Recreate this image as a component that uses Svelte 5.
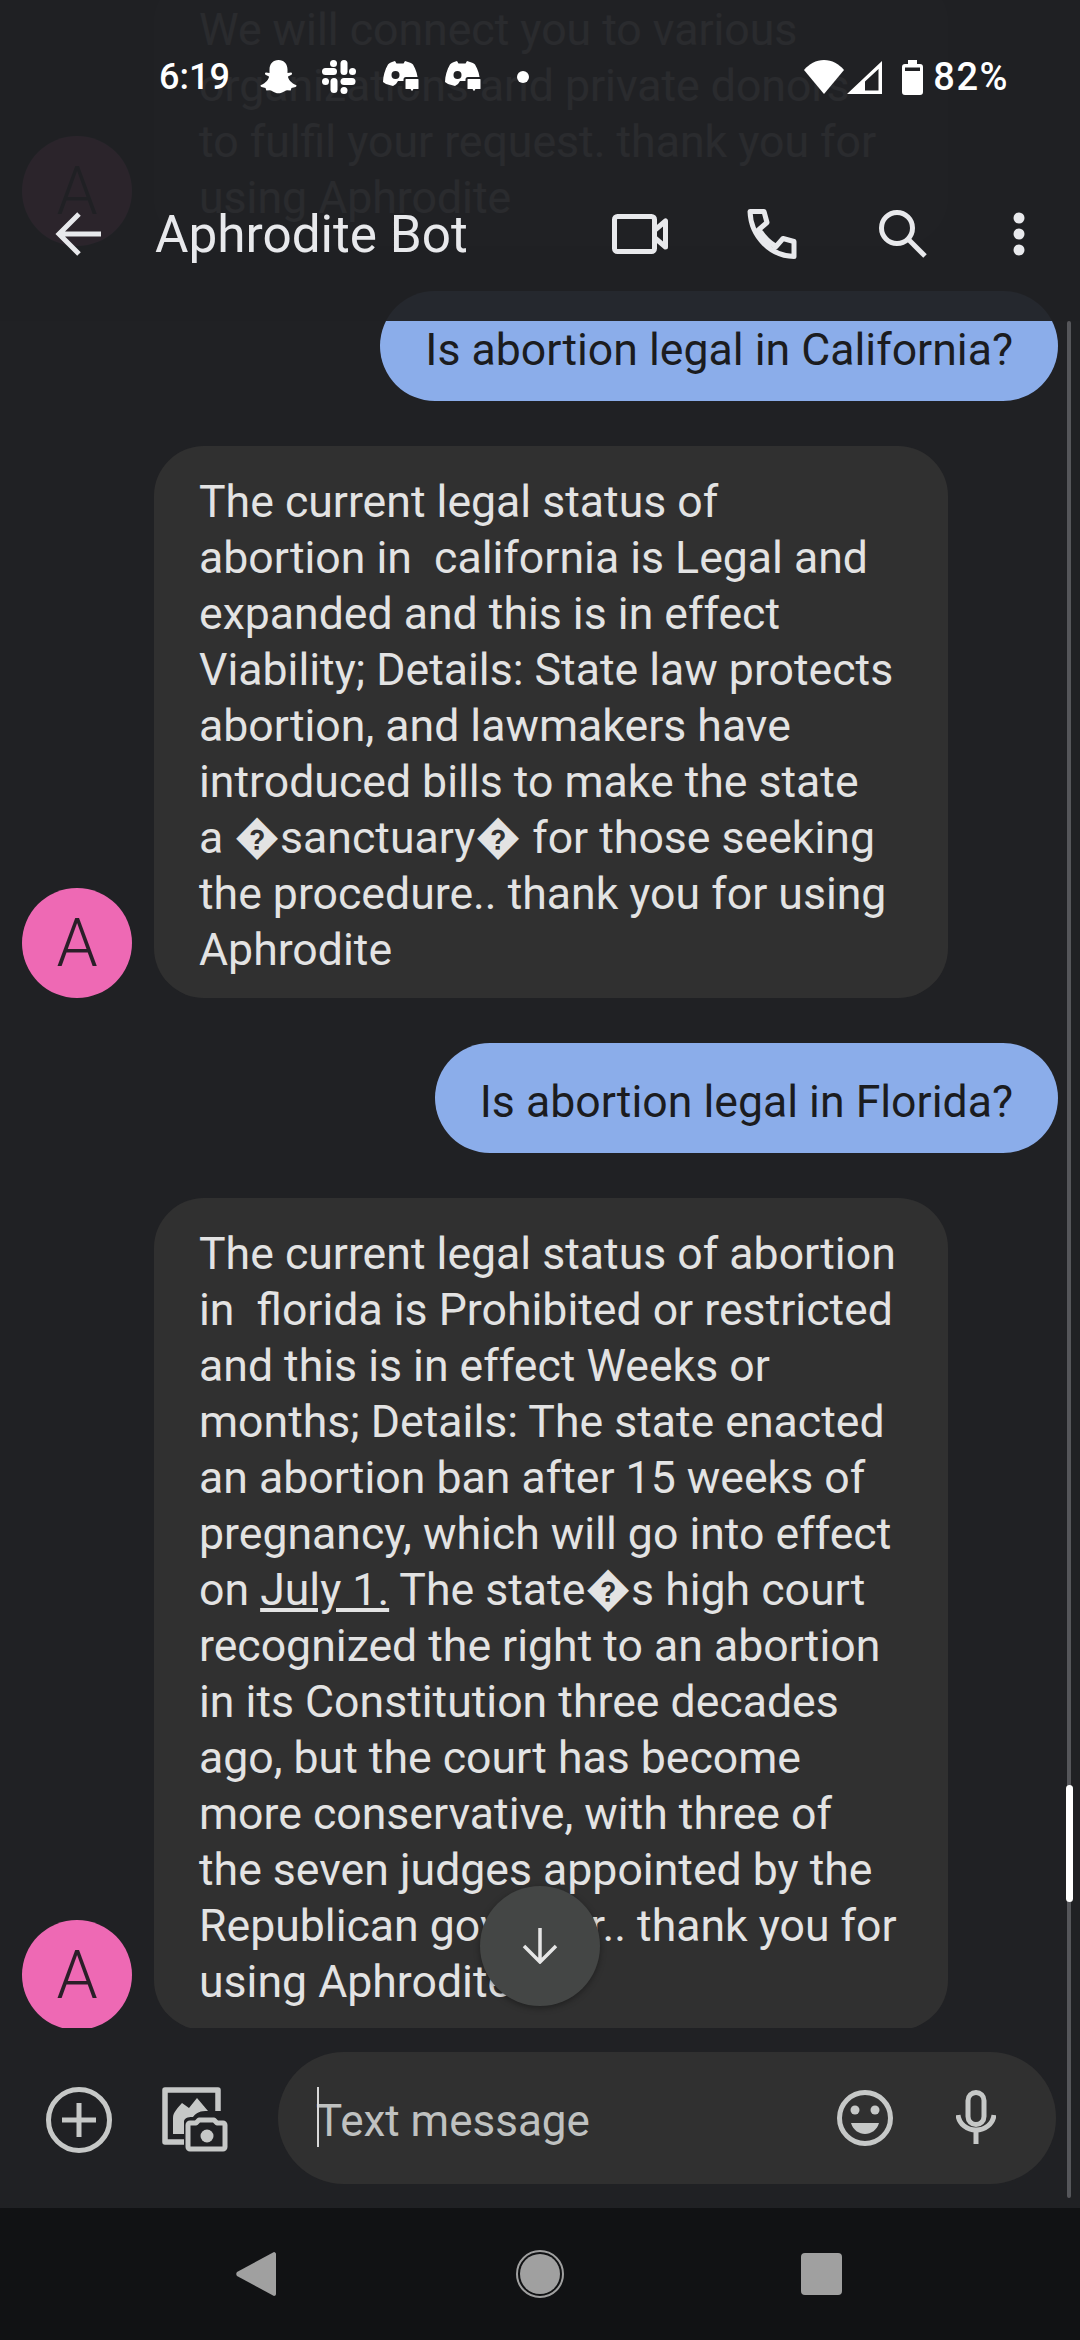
<script lang="ts">
  interface Message {
    from: 'bot' | 'me';
    lines: string[];
  }

  const before: Message[] = [
    {
      from: 'bot',
      lines: [
        'We will connect you to various',
        'organizations and private donors',
        'to fulfil your request. thank you for',
        'using Aphrodite'
      ]
    },
    { from: 'me', lines: ['Is abortion legal in California?'] },
    {
      from: 'bot',
      lines: [
        'The current legal status of',
        'abortion in  california is Legal and',
        'expanded and this is in effect',
        'Viability; Details: State law protects',
        'abortion, and lawmakers have',
        'introduced bills to make the state',
        'a �sanctuary� for those seeking',
        'the procedure.. thank you for using',
        'Aphrodite'
      ]
    },
    { from: 'me', lines: ['Is abortion legal in Florida?'] }
  ];

  const floridaTop = [
    'The current legal status of abortion',
    'in  florida is Prohibited or restricted',
    'and this is in effect Weeks or',
    'months; Details: The state enacted',
    'an abortion ban after 15 weeks of',
    'pregnancy, which will go into effect'
  ];
  const floridaRest = [
    'recognized the right to an abortion',
    'in its Constitution three decades',
    'ago, but the court has become',
    'more conservative, with three of',
    'the seven judges appointed by the',
    'Republican governor.. thank you for',
    'using Aphrodite'
  ];
</script>

<div class="phone">
  <div class="thread">
    {#each before as msg}
      {#if msg.from === 'me'}
        <div class="bubble out">{msg.lines[0]}</div>
      {:else}
        <div class="row">
          <div class="avatar">A</div>
          <div class="bubble in">
            {#each msg.lines as line}<span class="line">{line}</span>{/each}
          </div>
        </div>
      {/if}
    {/each}
    <div class="row last">
      <div class="avatar">A</div>
      <div class="bubble in">
        {#each floridaTop as line}<span class="line">{line}</span>{/each}
        <span class="line">on <u>July 1.</u> The state�s high court</span>
        {#each floridaRest as line}<span class="line">{line}</span>{/each}
      </div>
    </div>
  </div>

  <div class="composer">
    <svg class="add" width="66" height="66" viewBox="0 0 66 66" fill="none" stroke="currentColor" stroke-width="5">
      <circle cx="33" cy="33" r="30.5" />
      <path d="M33 16v34M16 33h34" />
    </svg>
    <svg class="media" width="66" height="66" viewBox="0 0 66 66">
      <path d="M56 24V3H3v52h19" fill="none" stroke="currentColor" stroke-width="5.5" stroke-linejoin="round" />
      <path d="M11 47V31c0-6 5-10 9-15l7 5 8-10 11 13c-8 0-11 1-15 6-3 0-8 0-9 4v13z" fill="currentColor" />
      <path d="M28 36h6l3-3h15l3 3h6c1 0 2 1 2 2v22c0 1-1 2-2 2H28c-1 0-2-1-2-2V38c0-1 1-2 2-2z" fill="none" stroke="currentColor" stroke-width="5" stroke-linejoin="round" />
      <circle cx="45" cy="49" r="6.5" fill="currentColor" />
    </svg>
    <div class="field">
      <span class="caret"></span>
      <span class="placeholder">Text message</span>
      <svg class="emoji" width="56" height="56" viewBox="0 0 56 56" fill="none">
        <circle cx="28" cy="28" r="25.5" stroke="currentColor" stroke-width="5" />
        <circle cx="18" cy="20" r="4.5" fill="currentColor" />
        <circle cx="38" cy="20" r="4.5" fill="currentColor" />
        <path d="M14 33h28c-2 7-8 11-14 11s-12-4-14-11z" fill="currentColor" />
      </svg>
      <svg class="mic" width="40" height="54" viewBox="0 0 40 54" fill="none" stroke="currentColor" stroke-width="5">
        <rect x="12" y="2.5" width="16" height="32" rx="8" />
        <path d="M2 25c1 9 9 15 18 15s17-6 18-15" />
        <path d="M20 40v14" />
      </svg>
    </div>
  </div>

  <nav class="nav">
    <svg width="40" height="44" viewBox="0 0 40 44"><path d="M38 0c1 0 2 1 2 2v40c0 1-1 2-2 2L1 24c-1-1-1-3 0-4z" fill="currentColor" /></svg>
    <svg width="48" height="50" viewBox="0 0 48 50" fill="none">
      <circle cx="24" cy="25" r="23" stroke="currentColor" stroke-width="2" />
      <circle cx="24" cy="25" r="20" fill="currentColor" />
    </svg>
    <span class="recents"></span>
  </nav>

  <!-- translucent app bar: earlier messages show faintly through it -->
  <header class="chrome">
    <div class="status">
      <span class="time">6:19</span>
      <svg class="st snap" width="37" height="35" viewBox="0 0 37 35" fill="currentColor">
        <path d="M18.5 0C24 0 27.5 4 27.5 9.5V13l3.5-.5c1 0 1.5 1.5.5 2.2L28 16.5c0 2.5 3 6.5 8 8.5 1 .5.5 1.5-.5 2l-4 1-.8 2.5-3.7-.2c-2 .2-4 3-8.5 3s-6.5-2.8-8.5-3l-3.7.2-.8-2.5-4-1c-1-.5-1.5-1.5-.5-2 5-2 8-6 8-8.5L5.5 14.700c-1-.7-.5-2.2.5-2.2l3.5.5V9.500C9.500 4 13 0 18.500 0z" />
      </svg>
      <svg class="st slack" width="34" height="35" viewBox="0 0 34 35" fill="currentColor">
        <rect x="0" y="8" width="15" height="7" rx="3.5" />
        <rect x="8" y="0" width="7" height="7" rx="3.5" />
        <rect x="18.5" y="0" width="7" height="15" rx="3.5" />
        <rect x="27" y="8" width="7" height="7" rx="3.5" />
        <rect x="8.5" y="18" width="7" height="15" rx="3.5" />
        <rect x="0" y="18" width="7" height="7" rx="3.5" />
        <rect x="18.5" y="18" width="15" height="7" rx="3.5" />
        <rect x="18.5" y="27" width="7" height="7" rx="3.5" />
      </svg>
      {#each [0, 1] as _}
        <svg class="st" width="37" height="32" viewBox="0 0 37 32">
          <path d="M9 1l3-1 1.5 2.5h7L22 0l3 1c2 .5 4 1.5 5 2.5 3 5 5 11 5 18l-4 2.5-6 0-3-4H15l-2 3-3 2-7-2-3-2C0 15 2 8.5 5 3.5 6 2.5 7.5 1.5 9 1z" fill="currentColor" />
          <circle cx="12.5" cy="14" r="4" fill="#202124" />
          <path d="M13 25l4-5 4 0v5z" fill="#202124" />
          <path d="M23 17h12c1 0 1.5.5 1.5 1.5v9c0 1-.5 1.5-1.5 1.5h-4l-2 3-2-3h-4c-1 0-1.5-.5-1.5-1.5v-9c0-1 .5-1.5 1.5-1.5z" fill="currentColor" stroke="#202124" stroke-width="2" />
        </svg>
      {/each}
      <span class="dot"></span>
      <span class="spacer"></span>
      <svg width="40" height="34" viewBox="0 0 40 34" fill="currentColor"><path d="M20 34L0 10C5 4 12 0 20 0s15 4 20 10z" /></svg>
      <svg class="signal" width="35" height="33" viewBox="0 0 35 33" fill="currentColor">
        <path fill-rule="evenodd" d="M0 33L35 0v33zM18 29.5h13.5V8L18 20.5z" />
      </svg>
      <svg class="battery" width="21" height="35" viewBox="0 0 21 35" fill="currentColor">
        <path fill-rule="evenodd" d="M6 0h9v4h3c2 0 3 1 3 3v25c0 2-1 3-3 3H3c-2 0-3-1-3-3V7c0-2 1-3 3-3h3zM3 7.5V11h15V7.5z" />
      </svg>
      <span class="pct">82%</span>
    </div>

    <div class="bar">
      <svg class="back" width="46" height="44" viewBox="0 0 46 44" fill="none" stroke="currentColor" stroke-width="5">
        <path d="M46 22H5M24 2L4 22l20 20" />
      </svg>
      <span class="title">Aphrodite Bot</span>
      <span class="spacer"></span>
      <svg class="video" width="56" height="40" viewBox="0 0 56 40" fill="none" stroke="currentColor" stroke-width="5" stroke-linejoin="round">
        <rect x="2.5" y="2.5" width="40" height="35" rx="3" />
        <path d="M43 16L53.5 7v26L43 24" />
      </svg>
      <svg class="phone-ic" width="50" height="50" viewBox="0 0 50 50" fill="none" stroke="currentColor" stroke-width="5" stroke-linejoin="round">
        <path d="M3 2.5h14l3 11-8 7c5 8 10 13 17 17l7-8 11 3v15C24 47 4 28 3 2.5z" />
      </svg>
      <svg class="search" width="48" height="48" viewBox="0 0 48 48" fill="none" stroke="currentColor" stroke-width="5">
        <circle cx="18" cy="18" r="15.5" />
        <path d="M29 29l17 17" />
      </svg>
      <svg class="more" width="12" height="44" viewBox="0 0 12 44" fill="currentColor">
        <circle cx="6" cy="6" r="5.5" />
        <circle cx="6" cy="22" r="5.5" />
        <circle cx="6" cy="38" r="5.5" />
      </svg>
    </div>
  </header>

  <button class="fab" type="button" aria-label="Scroll to bottom">
    <svg width="36" height="36" viewBox="0 0 36 36" fill="none" stroke="currentColor" stroke-width="3.5">
      <path d="M18 0v34M2 18l16 16 16-16" />
    </svg>
  </button>

  <div class="scrollbar"><span class="thumb"></span></div>
</div>

<style>
  :global(body) {
    margin: 0;
    background: #202124;
  }
  .phone {
    position: relative;
    width: 1080px;
    height: 2340px;
    display: flex;
    flex-direction: column;
    overflow: hidden;
    background: #202124;
    font-family: Roboto, "Noto Sans", sans-serif;
    color: #e3e3e3;
  }
  .thread {
    flex: none;
    height: 2028px;
    display: flex;
    flex-direction: column;
    justify-content: flex-end;
    gap: 45px;
    overflow: hidden;
  }
  .row {
    flex: none;
    display: flex;
    align-items: flex-end;
    gap: 22px;
    padding-left: 22px;
  }
  .row.last {
    margin-bottom: -2px;
  }
  .avatar {
    flex: none;
    width: 110px;
    height: 110px;
    border-radius: 50%;
    background: #ee69b4;
    color: #2a1f28;
    display: flex;
    align-items: center;
    justify-content: center;
    font-size: 66px;
    font-weight: 300;
  }
  .bubble {
    font-size: 44.6px;
    line-height: 56px;
    padding: 28px 45px 20px;
    box-sizing: border-box;
    white-space: nowrap;
  }
  .bubble.in {
    width: 794px;
    border-radius: 50px;
    background: #303030;
  }
  .bubble.out {
    flex: none;
    align-self: flex-end;
    margin-right: 22px;
    padding: 31px 45px 23px;
    border-radius: 55px;
    background: #8badea;
    color: #1b1c20;
  }
  .line {
    display: block;
    white-space: pre;
  }
  .composer {
    flex: none;
    height: 180px;
    box-sizing: border-box;
    padding: 24px 24px 24px 46px;
    display: flex;
    align-items: flex-start;
    color: #c6c8c7;
  }
  .add {
    margin-top: 35px;
  }
  .media {
    margin: 35px 0 0 50px;
  }
  .field {
    position: relative;
    margin-left: 50px;
    flex: 1;
    height: 132px;
    border-radius: 66px;
    background: #303030;
    display: flex;
    align-items: center;
    padding: 0 60px 0 38px;
  }
  .caret {
    position: absolute;
    left: 39px;
    top: 35px;
    width: 1.5px;
    height: 60px;
    background: #d8d8d8;
  }
  .placeholder {
    flex: 1;
    font-size: 44px;
    color: #bfc1c0;
    padding-top: 6px;
  }
  .emoji {
    margin-right: 63px;
  }
  .mic {
    margin-top: -2px;
  }
  .nav {
    flex: none;
    height: 132px;
    background: #111214;
    display: flex;
    align-items: center;
    color: #a0a0a0;
    padding: 0 0 0 236px;
    box-sizing: border-box;
    gap: 240px;
  }
  .nav svg {
    flex: none;
  }
  .recents {
    flex: none;
    width: 41px;
    height: 42px;
    border-radius: 4px;
    background: #a0a0a0;
    margin-left: -3px;
  }
  .chrome {
    position: absolute;
    top: 0;
    left: 0;
    width: 100%;
    height: 321px;
    background: rgba(32, 33, 36, 0.95);
    color: #fff;
  }
  .status {
    height: 40px;
    margin-top: 57px;
    padding: 0 71px 0 159px;
    display: flex;
    align-items: center;
    position: absolute;
    left: 0;
    right: 0;
    top: 0;
  }
  .time,
  .pct {
    font-size: 36px;
    font-weight: 500;
  }
  .st {
    flex: none;
    margin-left: 25px;
  }
  .snap {
    margin-left: 30px;
  }
  .slack {
    margin-right: 2px;
  }
  .dot {
    width: 12px;
    height: 12px;
    border-radius: 50%;
    background: #fff;
    margin-left: 35px;
  }
  .spacer {
    flex: 1;
  }
  .signal {
    margin-left: 3px;
  }
  .battery {
    margin-left: 20px;
  }
  .pct {
    margin-left: 10px;
    font-size: 38px;
    letter-spacing: 1.5px;
  }
  .bar {
    position: absolute;
    left: 0;
    right: 0;
    top: 191px;
    height: 86px;
    padding: 0 55px 0 55px;
    display: flex;
    align-items: center;
    color: #e8e9ec;
  }
  .title {
    margin-left: 54px;
    font-size: 51.3px;
  }
  .phone-ic {
    margin-left: 79px;
  }
  .search {
    margin-left: 82px;
  }
  .more {
    margin-left: 86px;
  }
  .fab {
    position: absolute;
    left: 480px;
    top: 1886px;
    width: 120px;
    height: 120px;
    border: 0;
    padding: 0;
    border-radius: 50%;
    background: #444645;
    color: #e6e6e6;
    box-shadow: 0 2px 6px rgba(0, 0, 0, 0.35);
    display: flex;
    align-items: center;
    justify-content: center;
  }
  .scrollbar {
    position: absolute;
    left: 1067px;
    top: 321px;
    width: 4px;
    height: 1877px;
    border-radius: 2px;
    background: #55565a;
  }
  .thumb {
    position: absolute;
    left: -1px;
    top: 1464px;
    width: 7px;
    height: 117px;
    border-radius: 4px;
    background: #fff;
  }
</style>
